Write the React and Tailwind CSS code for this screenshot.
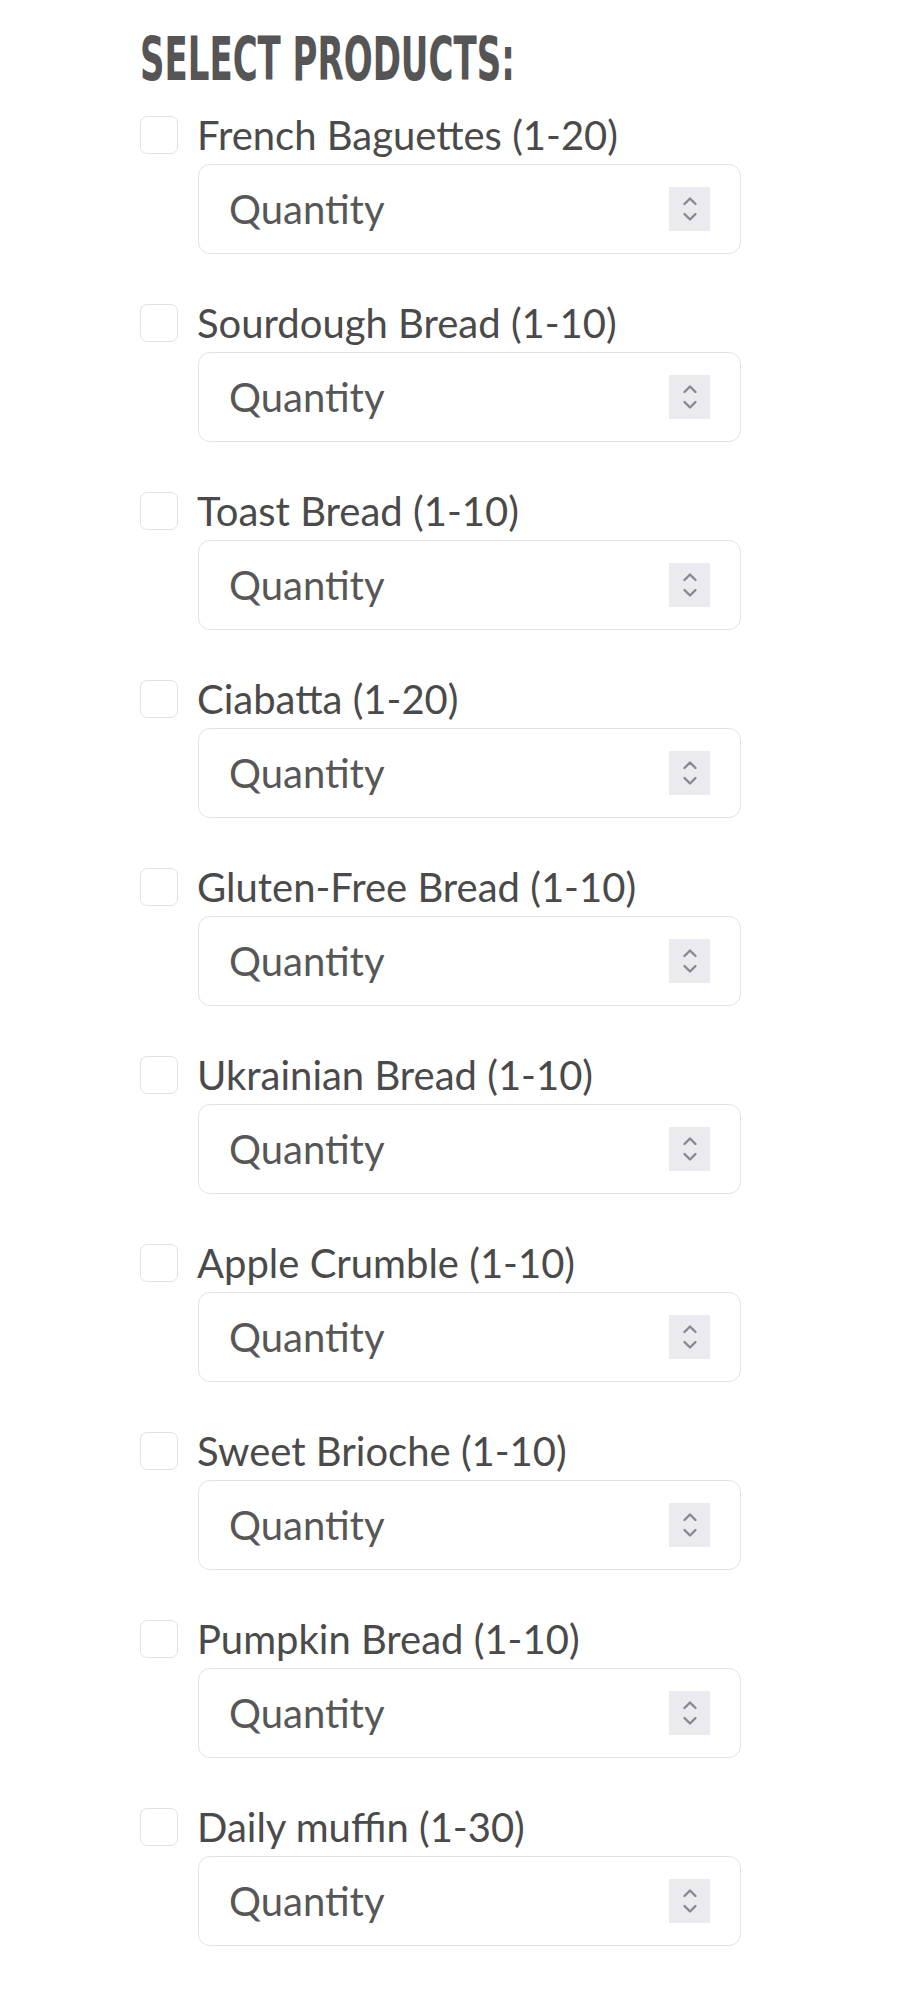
import React from "react";

const products = [
  "French Baguettes (1-20)",
  "Sourdough Bread (1-10)",
  "Toast Bread (1-10)",
  "Ciabatta (1-20)",
  "Gluten-Free Bread (1-10)",
  "Ukrainian Bread (1-10)",
  "Apple Crumble (1-10)",
  "Sweet Brioche (1-10)",
  "Pumpkin Bread (1-10)",
  "Daily muffin (1-30)",
];

function Spinner() {
  return (
    <div className="w-[41px] h-[44px] bg-[#ebebef] flex items-center justify-center shrink-0">
      <svg width="18" height="32" viewBox="0 0 18 32" fill="none" stroke="#88888e" strokeWidth="2.4" strokeLinecap="round" strokeLinejoin="round">
        <path d="M3.5 11 L9 5.5 L14.5 11" />
        <path d="M3.5 21 L9 26.5 L14.5 21" />
      </svg>
    </div>
  );
}

function Item({ name }) {
  return (
    <div className="flex flex-col">
      <label className="flex items-center gap-[19px] h-[38px]">
        <span className="w-[38px] h-[38px] rounded-[7px] border-[1.5px] border-[#e1e1e1] bg-white shrink-0" />
        <span className="text-[40px] leading-none text-[#4a4a4a] font-['Lato',sans-serif]">
          {name}
        </span>
      </label>
      <div className="ml-[58px] mt-[10px] w-[543px] h-[90px] rounded-[12px] border-[1.5px] border-[#e2e2e2] bg-white flex items-center pl-[30px] pr-[30px]">
        <input
          type="text"
          placeholder="Quantity"
          className="flex-1 min-w-0 bg-transparent outline-none text-[40px] leading-none text-[#555] placeholder:text-[#575757] font-['Lato',sans-serif]"
        />
        <Spinner />
      </div>
    </div>
  );
}

export default function App() {
  return (
    <div className="min-h-[2000px] bg-white pl-[140px] pt-[29px]">
      <h2 className="h-[60px] text-[60px] leading-none font-bold text-[#555] font-['Liberation_Sans_Narrow','DejaVu_Sans_Condensed',sans-serif] origin-left scale-x-[0.63] whitespace-nowrap">
        SELECT PRODUCTS:
      </h2>
      <div className="mt-[27px] flex flex-col gap-[50px]">
        {products.map((p) => (
          <Item key={p} name={p} />
        ))}
      </div>
    </div>
  );
}
